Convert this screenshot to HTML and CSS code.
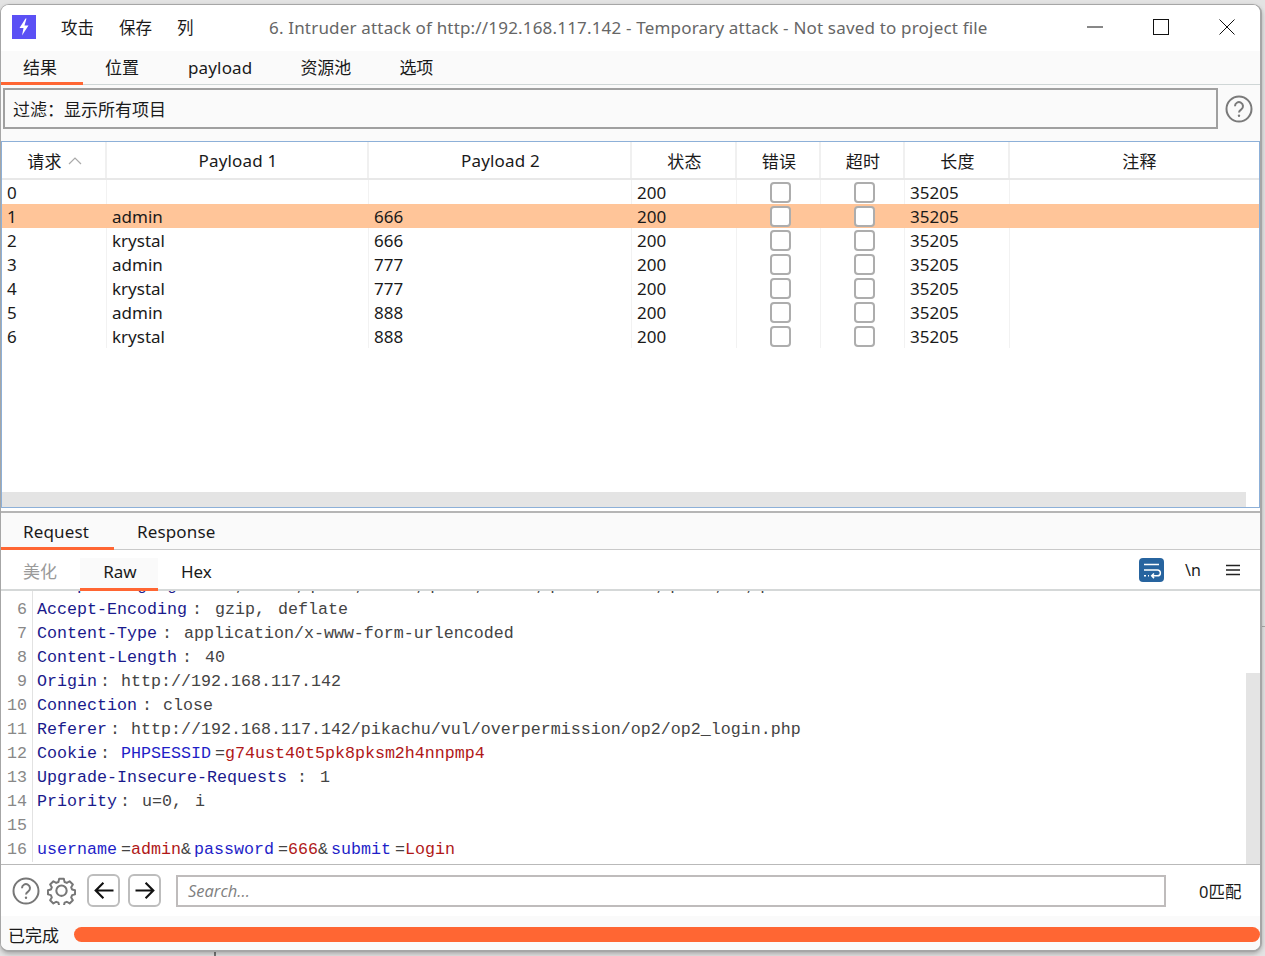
FILE: index.html
```
<!DOCTYPE html>
<html lang="zh">
<head>
<meta charset="utf-8">
<title>Intruder attack</title>
<link rel="stylesheet" href="styles.css">
</head>
<body>
<div class="desk-line"></div>
<div class="desk-tick"></div>
<main class="window">
  <header class="titlebar">
    <svg class="logo" viewBox="0 0 24 24"><rect width="24" height="24" fill="#5b50f5"/><path d="M13.500 3.500 7.500 13h4l-1.500 7.500 6.500-10h-4l2-7z" fill="#fff"/></svg>
    <nav class="menu"><span>攻击</span><span>保存</span><span>列</span></nav>
    <div class="title">6. Intruder attack of http://192.168.117.142 - Temporary attack - Not saved to project file</div>
    <div class="winbtns">
      <svg viewBox="0 0 16 16"><path d="M0 8h16" stroke="#111" fill="none"/></svg>
      <svg viewBox="0 0 16 16"><rect x=".5" y=".5" width="15" height="15" stroke="#111" fill="none"/></svg>
      <svg viewBox="0 0 16 16"><path d="M.5.5l15 15M15.500.5l-15 15" stroke="#111" fill="none"/></svg>
    </div>
  </header>
  <div class="tabs main-tabs">
    <span class="tab active t-result">结果</span>
    <span class="tab t-pos">位置</span>
    <span class="tab t-pay">payload</span>
    <span class="tab t-pool">资源池</span>
    <span class="tab t-opt">选项</span>
  </div>
  <section class="filterbar">
    <div class="filter">过滤：显示所有项目</div>
    <svg class="help" viewBox="0 0 28 28"><circle cx="14" cy="14" r="12.500" fill="none" stroke="#7a7a7a" stroke-width="2"/><path d="M10 11.200a4 4 0 1 1 6.300 3.200c-1.500 1-2.300 1.600-2.300 3.100" fill="none" stroke="#7a7a7a" stroke-width="2"/><circle cx="14" cy="20.800" r="1.200" fill="#7a7a7a"/></svg>
  </section>
  <section class="results">
    <table class="grid">
      <colgroup><col class="c1"><col class="c2"><col class="c3"><col class="c4"><col class="c5"><col class="c6"><col class="c7"><col class="c8"></colgroup>
      <thead>
        <tr>
          <th><span class="sort">请求<svg viewBox="0 0 14 8"><path d="M1 7l6-6 6 6" fill="none" stroke="#aaa" stroke-width="1.200"/></svg></span></th>
          <th>Payload 1</th><th>Payload 2</th><th>状态</th><th>错误</th><th>超时</th><th>长度</th><th class="note">注释</th>
        </tr>
      </thead>
      <tbody>
        <tr><td>0</td><td></td><td></td><td>200</td><td class="chk"><i></i></td><td class="chk"><i></i></td><td>35205</td><td class="end"></td></tr>
        <tr class="sel"><td>1</td><td>admin</td><td>666</td><td>200</td><td class="chk"><i></i></td><td class="chk"><i></i></td><td>35205</td><td class="end"></td></tr>
        <tr><td>2</td><td>krystal</td><td>666</td><td>200</td><td class="chk"><i></i></td><td class="chk"><i></i></td><td>35205</td><td class="end"></td></tr>
        <tr><td>3</td><td>admin</td><td>777</td><td>200</td><td class="chk"><i></i></td><td class="chk"><i></i></td><td>35205</td><td class="end"></td></tr>
        <tr><td>4</td><td>krystal</td><td>777</td><td>200</td><td class="chk"><i></i></td><td class="chk"><i></i></td><td>35205</td><td class="end"></td></tr>
        <tr><td>5</td><td>admin</td><td>888</td><td>200</td><td class="chk"><i></i></td><td class="chk"><i></i></td><td>35205</td><td class="end"></td></tr>
        <tr><td>6</td><td>krystal</td><td>888</td><td>200</td><td class="chk"><i></i></td><td class="chk"><i></i></td><td>35205</td><td class="end"></td></tr>
      </tbody>
    </table>
    <div class="hscroll"><div class="hthumb"></div></div>
  </section>
  <div class="splitter"></div>
  <div class="tabs msg-tabs">
    <span class="tab active t-req">Request</span>
    <span class="tab t-resp">Response</span>
  </div>
  <div class="viewbar">
    <span class="vt t-pretty">美化</span>
    <span class="vt t-raw">Raw</span>
    <span class="vt t-hex">Hex</span>
    <div class="viewicons">
      <svg class="wrap" viewBox="0 0 25 24"><rect width="25" height="24" rx="4" fill="#27649f"/><path d="M5 6.500h15M5 12h13.500a2.800 2.800 0 0 1 0 5.800H13M15 15.500l-2.300 2.300 2.300 2.300M5 17.800h2M9 17.800h1" fill="none" stroke="#fff" stroke-width="1.500"/></svg>
      <span class="nl">\n</span>
      <svg class="burger" viewBox="0 0 14 12"><path d="M0 1.500h14M0 6h14M0 10.500h14" stroke="#222" stroke-width="1.500"/></svg>
    </div>
  </div>
  <section class="editor">
    <div class="code">
      <div class="ln"><b>5</b><code><span class="k">Accept-Language</span><span class="sep w28">:</span>zh,zh-TW;q=0.9,zh-HK;q=0.8,en-US;q=0.7,en-GB;q=0.6,en;q=0.5</code></div>
      <div class="ln"><b>6</b><code><span class="k">Accept-Encoding</span><span class="sep w28">:</span>gzip,<span class="gap13"></span>deflate</code></div>
      <div class="ln"><b>7</b><code><span class="k">Content-Type</span><span class="sep w27">:</span>application/x-www-form-urlencoded</code></div>
      <div class="ln"><b>8</b><code><span class="k">Content-Length</span><span class="sep w28">:</span>40</code></div>
      <div class="ln"><b>9</b><code><span class="k">Origin</span><span class="sep w24">:</span>http://192.168.117.142</code></div>
      <div class="ln"><b>10</b><code><span class="k">Connection</span><span class="sep w26">:</span>close</code></div>
      <div class="ln"><b>11</b><code><span class="k">Referer</span><span class="sep w24">:</span>http://192.168.117.142/pikachu/vul/overpermission/op2/op2_login.php</code></div>
      <div class="ln"><b>12</b><code><span class="k">Cookie</span><span class="sep w24">:</span><span class="p">PHPSESSID</span><span class="eq">=</span><span class="r">g74ust40t5pk8pksm2h4nnpmp4</span></code></div>
      <div class="ln"><b>13</b><code><span class="k">Upgrade-Insecure-Requests</span><span class="sep w33">:</span>1</code></div>
      <div class="ln"><b>14</b><code><span class="k">Priority</span><span class="sep w25">:</span>u=0,<span class="gap13"></span>i</code></div>
      <div class="ln"><b>15</b><code></code></div>
      <div class="ln"><b>16</b><code><span class="p">username</span><span class="eq">=</span><span class="r">admin</span><span class="amp">&amp;</span><span class="p">password</span><span class="eq">=</span><span class="r">666</span><span class="amp">&amp;</span><span class="p">submit</span><span class="eq">=</span><span class="r">Login</span></code></div>
    </div>
    <div class="vscroll"><div class="vthumb"></div></div>
  </section>
  <div class="searchbar">
    <svg class="ic-help" viewBox="0 0 28 28"><circle cx="14" cy="14" r="12.500" fill="none" stroke="#777" stroke-width="2"/><path d="M10 11.200a4 4 0 1 1 6.300 3.200c-1.500 1-2.300 1.600-2.300 3.100" fill="none" stroke="#777" stroke-width="2"/><circle cx="14" cy="20.800" r="1.200" fill="#777"/></svg>
    <svg class="ic-gear" viewBox="0 0 28 28"><path d="M11.500 1.500h5l.8 3.400 2.400 1 3-1.800 3.500 3.500-1.800 3 1 2.400 3.100.8v4.400l-3.100.8-1 2.400 1.800 3-3.500 3.500-3-1.800-2.400 1-.8 3.400h-5l-.8-3.400-2.400-1-3 1.800-3.500-3.500 1.800-3-1-2.400-3.100-.8v-4.400l3.100-.8 1-2.400-1.800-3 3.500-3.500 3 1.800 2.400-1z" transform="translate(1.400 1.400) scale(.9)" fill="none" stroke="#777" stroke-width="2.100" stroke-linejoin="round"/><circle cx="14" cy="14.200" r="5" fill="none" stroke="#777" stroke-width="2"/></svg>
    <button class="nav" type="button"><svg viewBox="0 0 18 16"><path d="M17 8H2M8.500 1.500 2 8l6.500 6.500" fill="none" stroke="#111" stroke-width="1.800"/></svg></button>
    <button class="nav" type="button"><svg viewBox="0 0 18 16"><path d="M1 8h15M9.500 1.500 16 8l-6.500 6.500" fill="none" stroke="#111" stroke-width="1.800"/></svg></button>
    <div class="search">Search...</div>
    <div class="matches">0匹配</div>
  </div>
  <footer class="status">
    <span class="done">已完成</span>
    <div class="progress"></div>
  </footer>
</main>
</body>
</html>
```
FILE: styles.css
```
* { box-sizing: border-box; }
html, body { height: 100%; }
body {
  margin: 0;
  padding: 4px 3px 4px 0;
  background: #e3e3e3;
  overflow: hidden;
  font-family: "Noto Sans", "Noto Sans CJK SC", sans-serif;
  font-size: 17px;
  color: #1a1a1a;
}
.desk-line { position: absolute; left: 214px; top: 950px; width: 2px; height: 6px; background: #777; }
.desk-tick { position: absolute; right: 0; top: 626px; width: 3px; height: 1px; background: #aaa; }
.window {
  position: relative;
  height: 948px;
  display: flex;
  flex-direction: column;
  background: #fff;
  border: 1px solid #a6a6a6;
  border-width: 1px 2px 2px 1px;
  border-radius: 9px;
  overflow: hidden;
  box-shadow: 0 2px 4px rgba(0,0,0,.25);
}
.titlebar { height: 46px; flex: none; display: flex; align-items: center; padding: 0 0 2px 11px; background: #fff; }
.logo { width: 24px; height: 24px; flex: none; }
.menu { display: flex; gap: 25px; margin-left: 25px; width: 208px; flex: none; font-size: 16.500px; }
.title { flex: 1; letter-spacing: .18px; color: #666; font-size: 17px; white-space: nowrap; }
.winbtns { display: flex; gap: 50px; width: 173px; flex: none; align-items: center; }
.winbtns svg { width: 16px; height: 16px; }

.tabs { position: relative; flex: none; display: flex; background: #fafafa; border-bottom: 1px solid #cfd6d6; }
.main-tabs { height: 34px; line-height: 34px; }
.tab { display: block; position: relative; height: 100%; white-space: nowrap; }
.tab.active::after { content: ""; position: absolute; left: 0; right: 0; bottom: -1px; height: 3px; background: #ff6633; }
.t-result { width: 82px; padding-left: 22px; }
.t-pos { margin-left: 22px; }
.t-pay { margin-left: 49px; letter-spacing: .15px; }
.t-pool { margin-left: 48px; }
.t-opt { margin-left: 48px; }

.filterbar { height: 56px; flex: none; display: flex; align-items: flex-start; background: #fafafa; padding: 3px 0 0 2px; }
.filter { width: 1215px; height: 41px; flex: none; border: 2px solid #a0a0a0; padding-left: 8px; line-height: 39px; background: #fafafa; }
.help { width: 28px; height: 28px; margin: 7px 0 0 7px; flex: none; }

.results { height: 367px; flex: none; display: flex; flex-direction: column; border: 1px solid #8db0d8; position: relative; background: #fff; }
.grid { width: 100%; table-layout: fixed; border-collapse: collapse; }
.c1 { width: 104px; } .c2 { width: 262px; } .c3 { width: 263px; } .c4 { width: 105px; } .c5 { width: 84px; } .c6 { width: 84px; } .c7 { width: 105px; }
thead tr { height: 37px; }
th { font-weight: 400; font-size: 17px; letter-spacing: .2px; border-right: 2px solid #f0f0f0; border-bottom: 2px solid #e8e8e8; padding: 1px 0 0 2px; }
th:last-child { border-right: 0; }
th.note { padding-left: 10px; }
.sort { display: inline-flex; align-items: center; gap: 6px; }
.sort svg { width: 14px; height: 8px; }
tbody tr { height: 24px; }
td { padding: 2px 0 0 5.500px; border-right: 1px solid #f2f2f2; height: 24px; line-height: 22px; white-space: nowrap; font-size: 17px; }
td:first-child { padding-left: 5px; }
td.end { border-right: 0; }
.sel td { background: #ffc599; border-right-color: #ffc599; }
td.chk { padding: 0; }
.chk i { display: block; width: 21px; height: 21px; margin: 2px 0 1px 33px; border: 2px solid #adadad; border-radius: 4px; background: #fff; }
.hscroll { position: absolute; left: 0; right: 0; bottom: 0; height: 15px; background: #fff; }
.hthumb { width: 1244px; height: 100%; background: #e4e4e4; }

.splitter { height: 5px; flex: none; border-bottom: 2px solid #b5b5b5; background: #fff; }
.msg-tabs { height: 37px; line-height: 37px; border-bottom-color: #c9c9c9; }
.t-req { width: 113px; padding-left: 22px; letter-spacing: .15px; }
.t-resp { margin-left: 23px; letter-spacing: .15px; }

.viewbar { position: relative; height: 41px; flex: none; display: flex; background: #fff; border-bottom: 2px solid #d5d8d8; padding-top: 8px; }
.vt { display: block; height: 33px; line-height: 27px; }
.t-pretty { color: #9a9a9a; width: 79px; padding-left: 22px; }
.t-raw { width: 78px; padding-left: 2px; text-align: center; background: #fafafa; border-bottom: 3px solid #ff6633; }
.t-hex { margin-left: 23px; }
.viewicons { position: absolute; right: 20px; top: 8px; display: flex; align-items: center; height: 24px; }
.wrap { width: 25px; height: 24px; }
.nl { margin-left: 21px; font-size: 16px; width: 14px; white-space: nowrap; }
.burger { width: 14px; height: 12px; margin-left: 27px; }

.editor { flex: 1; min-height: 0; position: relative; overflow: hidden; border-bottom: 1px solid #b9b9b9; background: #fff; }
.code { margin-top: -17px; }
.ln { display: flex; height: 24px; line-height: 24px; font-family: "Liberation Mono", monospace; font-size: 16.670px; color: #444; white-space: pre; }
.ln b { display: block; width: 32px; flex: none; font-weight: 400; text-align: right; padding-right: 5px; color: #888; border-right: 1px solid #e2e2e2; }
.ln code { font: inherit; padding-left: 4px; }
.k { color: #1a1a8c; }
.p { color: #1f1fc8; }
.r { color: #b01818; }
.eq { margin: 0 3px 0 4px; color: #444; display: inline-block; width: 7px; }
.amp { color: #444; display: inline-block; width: 13px; }
.sep { display: inline-block; padding-left: 5px; color: #444; }
.w24 { width: 24px; padding-left: 3px; } .w25 { width: 25px; padding-left: 3px; } .w26 { width: 26px; }
.w27 { width: 27px; } .w28 { width: 28px; } .w33 { width: 33px; padding-left: 10px; }
.gap13 { display: inline-block; width: 13px; }
.vscroll { position: absolute; right: 0; top: 0; bottom: 0; width: 14px; }
.vthumb { position: absolute; left: 0; right: 0; top: 82px; bottom: 0; background: #e4e4e4; }

.searchbar { height: 51px; flex: none; display: flex; align-items: center; background: #fff; padding-left: 11px; }
.ic-help { width: 28px; height: 28px; flex: none; }
.ic-gear { width: 29px; height: 29px; flex: none; margin-left: 7px; }
.nav { width: 33px; height: 33px; padding: 0; margin: 0 0 0 11px; border: 2px solid #bdbdbd; border-radius: 6px; background: #fff; display: flex; align-items: center; justify-content: center; flex: none; }
.nav + .nav { margin-left: 8px; }
.nav svg { width: 22px; height: 19px; }
.search { width: 990px; height: 32px; margin-left: 15px; border: 2px solid #bfbcbc; padding-left: 10px; line-height: 28px; color: #808080; font-style: italic; flex: none; font-size: 16.500px; font-family: "Open Sans", sans-serif; }
.matches { margin-left: 33px; font-size: 16.500px; white-space: nowrap; }

.status { height: 34px; flex: none; display: flex; align-items: center; background: #fafafa; padding: 3px 0 0 7px; }
.done { font-size: 17px; width: 66px; flex: none; }
.progress { flex: 1; height: 15px; border-radius: 8px; background: #ff6633; }
```
